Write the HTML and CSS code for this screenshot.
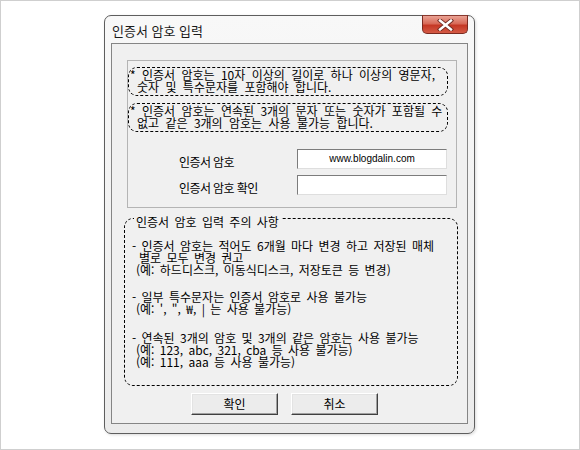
FILE: index.html
```html
<!DOCTYPE html>
<html lang="ko">
<head>
    <meta charset="UTF-8">
    <meta name="viewport" content="width=device-width, initial-scale=1.0">
    <title>인증서 암호 입력</title>
    <link rel="stylesheet" href="styles.css">
</head>
<body>
    <div class="page">
        <div class="dialog">
            <!-- 제목 표시줄 -->
            <div class="titlebar">
                <span class="title">인증서 암호 입력</span>
                <button class="close" type="button" aria-label="닫기">
                    <svg width="17" height="12" viewBox="0 0 17 12">
                        <path d="M3 1.5 L14 10.5 M14 1.5 L3 10.5" stroke="#6e2a22" stroke-width="4.2" stroke-linecap="square"/>
                        <path d="M3 1.5 L14 10.5 M14 1.5 L3 10.5" stroke="#ffffff" stroke-width="2.4" stroke-linecap="square"/>
                    </svg>
                </button>
            </div>

            <div class="client">
                <!-- 암호 입력 영역 -->
                <div class="panel">
                    <p class="notice">* 인증서 암호는 10자 이상의 길이로 하나 이상의 영문자,<span class="cont">숫자 및 특수문자를 포함해야 합니다.</span></p>
                    <p class="notice second">* 인증서 암호는 연속된 3개의 문자 또는 숫자가 포함될 수<span class="cont">없고 같은 3개의 암호는 사용 불가능 합니다.</span></p>

                    <div class="fields">
                        <div class="field-row">
                            <label class="field-label" for="pw">인증서 암호</label>
                            <div class="input" id="pw">www.blogdalin.com</div>
                        </div>
                        <div class="field-row">
                            <label class="field-label" for="pw2">인증서 암호 확인</label>
                            <div class="input" id="pw2"></div>
                        </div>
                    </div>
                </div>

                <!-- 주의 사항 -->
                <fieldset class="caution">
                    <legend>인증서 암호 입력 주의 사항</legend>
                    <div class="item">
                        <div>- 인증서 암호는 적어도 6개월 마다 변경 하고 저장된 매체</div>
                        <div class="wrap">별로 모두 변경 권고</div>
                        <div class="sub">(예: 하드디스크, 이동식디스크, 저장토큰 등 변경)</div>
                    </div>
                    <div class="item gap1">
                        <div>- 일부 특수문자는 인증서 암호로 사용 불가능</div>
                        <div class="sub">(예: ', ", ₩, | 는 사용 불가능)</div>
                    </div>
                    <div class="item gap2">
                        <div>- 연속된 3개의 암호 및 3개의 같은 암호는 사용 불가능</div>
                        <div class="sub">(예: 123, abc, 321, cba 등 사용 불가능)</div>
                        <div class="sub">(예: 111, aaa 등 사용 불가능)</div>
                    </div>
                </fieldset>

                <div class="buttons">
                    <button class="btn" type="button">확인</button>
                    <button class="btn" type="button">취소</button>
                </div>
            </div>
        </div>
    </div>
</body>
</html>
```

FILE: styles.css
```css
body {
    margin: 0;
    padding: 0;
    background-color: #ffffff;
    font-family: "Noto Sans CJK KR", "Liberation Sans", sans-serif;
    color: #000;
}
.page {
    width: 580px;
    height: 450px;
    box-sizing: border-box;
    border: 1px solid #cfcfcf;
    padding-top: 14px;
    padding-left: 103px;
}
.dialog {
    width: 371px;
    height: 419px;
    box-sizing: border-box;
    border: 1px solid #5e5e5e;
    border-radius: 7px;
    background: linear-gradient(#f8f8f8, #ebebeb);
    box-shadow: 1px 1px 3px rgba(0, 0, 0, 0.15);
    display: flex;
    flex-direction: column;
}
.titlebar {
    height: 27px;
    display: flex;
    justify-content: space-between;
    align-items: flex-start;
    padding: 0 6px 0 7px;
}
.title {
    font-size: 13px;
    line-height: 13px;
    margin-top: 8px;
    color: #1a1a1a;
}
.close {
    width: 46px;
    height: 19px;
    margin-top: -1px;
    padding: 0;
    border: 1px solid #7a2a20;
    border-top-color: #8a3a30;
    border-radius: 0 0 5px 5px;
    background: linear-gradient(#eaa294 0%, #d86a58 45%, #c53825 55%, #d45a45 100%);
    display: flex;
    align-items: center;
    justify-content: center;
}
.client {
    margin: 0 6px;
    height: 381px;
    box-sizing: border-box;
    border: 1px solid #858585;
    background-color: #f0f0f0;
    display: flex;
    flex-direction: column;
    align-items: flex-start;
}
.panel {
    margin: 16px 0 0 15px;
    width: 330px;
    height: 148px;
    box-sizing: border-box;
    border: 1px solid #b4b4b4;
    padding-top: 6px;
}
.notice {
    margin: 0;
    width: 320px;
    height: 29px;
    box-sizing: border-box;
    border: 1px dashed #000;
    border-radius: 9px;
    padding: 1px 0 0 1px;
    font-size: 12px;
    line-height: 12px;
    white-space: nowrap;
    word-spacing: 3px;
}
.notice.second {
    margin-top: 7px;
}
.cont {
    display: block;
    padding-left: 7px;
}
.fields {
    margin-top: 17px;
    display: flex;
    flex-direction: column;
    gap: 6px;
}
.field-row {
    display: flex;
    align-items: center;
}
.field-label {
    width: 169px;
    box-sizing: border-box;
    padding-left: 51px;
    padding-top: 6px;
    font-size: 12px;
    line-height: 12px;
    letter-spacing: -0.6px;
    white-space: nowrap;
}
.input {
    width: 150px;
    height: 20px;
    box-sizing: border-box;
    border: 1px solid;
    border-color: #7c7c7c #dedede #dedede #7c7c7c;
    background-color: #fff;
    font-family: "Liberation Sans", sans-serif;
    font-size: 10px;
    line-height: 18px;
    text-align: center;
}
.caution {
    margin: 0 0 0 12px;
    width: 334px;
    height: 178px;
    box-sizing: border-box;
    border: 1px dashed #000;
    border-radius: 9px;
    padding: 12px 0 0 7px;
    font-size: 12px;
    line-height: 12px;
    word-spacing: 2px;
}
.caution legend {
    margin-left: 2px;
    padding: 8px 2px 0 2px;
    line-height: 12px;
}
.item {
    white-space: nowrap;
}
.item.gap1 {
    margin-top: 15px;
}
.item.gap2 {
    margin-top: 17px;
}
.wrap {
    padding-left: 7px;
}
.sub {
    padding-left: 4px;
}
.buttons {
    margin-top: 7px;
    padding-left: 79px;
    display: flex;
    gap: 13px;
}
.btn {
    width: 87px;
    height: 22px;
    padding: 0;
    border: 1px solid;
    border-color: #ffffff #404040 #404040 #ffffff;
    box-shadow: inset -1px -1px 0 #a0a0a0, inset 1px 1px 0 #e3e3e3;
    background-color: #ececec;
    font-family: "Noto Sans CJK KR", sans-serif;
    font-size: 12px;
    line-height: 18px;
    color: #000;
}
```
